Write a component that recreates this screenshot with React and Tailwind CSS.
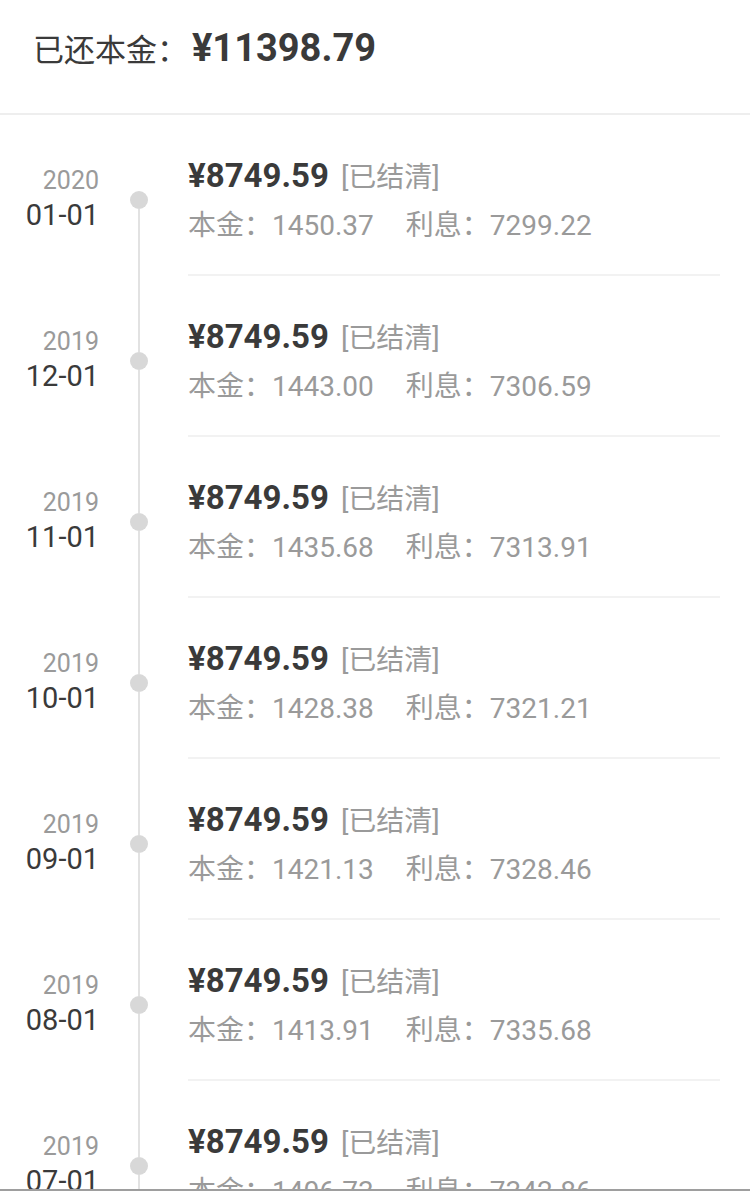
const FONT = "font-['Roboto','Noto_Sans_CJK_SC',sans-serif]";

const ROWS = [
  { year: "2020", date: "01-01", principal: "1450.37", interest: "7299.22" },
  { year: "2019", date: "12-01", principal: "1443.00", interest: "7306.59" },
  { year: "2019", date: "11-01", principal: "1435.68", interest: "7313.91" },
  { year: "2019", date: "10-01", principal: "1428.38", interest: "7321.21" },
  { year: "2019", date: "09-01", principal: "1421.13", interest: "7328.46" },
  { year: "2019", date: "08-01", principal: "1413.91", interest: "7335.68" },
  { year: "2019", date: "07-01", principal: "1406.73", interest: "7342.86" },
];

function Row({ row, first }) {
  return (
    <div className="flex h-[161px] shrink-0">
      {/* date */}
      <div className="w-[99px] shrink-0 text-right pt-[53px]">
        <div className="text-[25px] leading-[26px] text-[#9a9a9a]">{row.year}</div>
        <div className="mt-[5px] text-[29px] leading-[32px] text-[#3a3a3a]">{row.date}</div>
      </div>

      {/* timeline */}
      <div className="w-[80px] shrink-0 flex flex-col items-center">
        <div className={`w-[2px] h-[76px] ${first ? "bg-transparent" : "bg-[#e2e2e2]"}`} />
        <div className="w-[18px] h-[18px] rounded-full bg-[#d8d8d8]" />
        <div className="w-[2px] flex-1 bg-[#e2e2e2]" />
      </div>

      {/* content */}
      <div className="ml-[9px] mr-[30px] flex-1 flex flex-col pt-[41px] border-b-2 border-[#f2f2f2]">
        <div className="flex items-baseline h-[40px] leading-[40px]">
          <span className="text-[33px] font-bold text-[#3a3a3a]">¥8749.59</span>
          <span className="ml-[12px] text-[28px] text-[#9a9a9a]">[已结清]</span>
        </div>
        <div className="mt-[13px] h-[34px] leading-[34px] text-[28px] text-[#9a9a9a] whitespace-nowrap">
          <span>本金：{row.principal}</span>
          <span className="ml-[32px]">利息：{row.interest}</span>
        </div>
      </div>
    </div>
  );
}

export default function App() {
  return (
    <div className={`h-[1191px] bg-white flex flex-col overflow-hidden ${FONT}`}>
      {/* header */}
      <div className="h-[115px] shrink-0 border-b-2 border-[#eeeeee] pl-[33px] pt-[26px]">
        <div className="flex items-baseline h-[44px] leading-[44px] text-[#3a3a3a]">
          <span className="text-[31px]">已还本金：</span>
          <span className="ml-[4px] text-[38px] font-bold">¥11398.79</span>
        </div>
      </div>

      {/* list */}
      <div className="flex-1 flex flex-col overflow-hidden">
        {ROWS.map((row, i) => (
          <Row key={row.date + row.year} row={row} first={i === 0} />
        ))}
      </div>

      <div className="h-[2px] shrink-0 bg-[#9e9e9e]" />
    </div>
  );
}
